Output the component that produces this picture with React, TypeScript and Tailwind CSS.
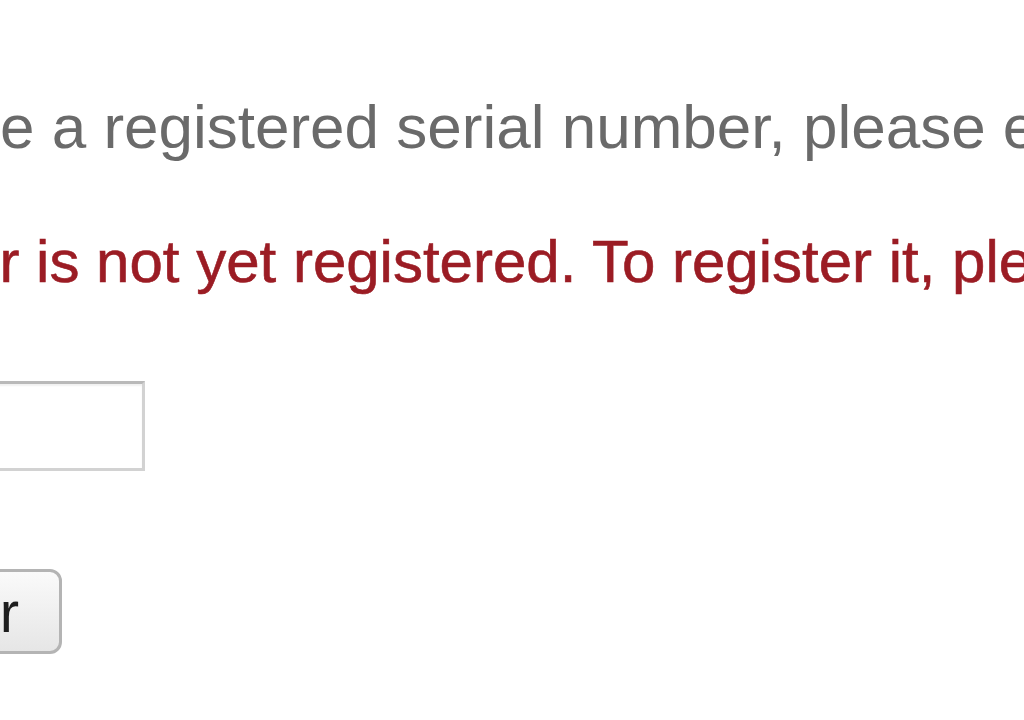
import React from "react";

export default function App() {
  return (
    <div
      className="w-[1024px] h-[720px] overflow-hidden bg-white"
      style={{ fontFamily: '"Liberation Sans", Arial, Helvetica, sans-serif' }}
    >
      <div className="flex flex-col items-start pt-[92px]">
        <p className="ml-[-100px] whitespace-nowrap text-[62px] leading-[70px] text-[#6a6a6a]">
          have a registered serial number, please enter it below.
        </p>
        <p className="ml-[-184px] mt-[65px] whitespace-nowrap text-[60px] leading-[70px] text-[#9b1c24] [-webkit-text-stroke:0.6px_#9b1c24]">
          number is not yet registered. To register it, please click here.
        </p>
        <div className="ml-[-300px] mt-[84px] h-[90px] w-[445px] border-[3px] border-[#d2d2d2] border-t-[#b9b9b9] bg-white shadow-[inset_0_2px_2px_rgba(0,0,0,0.06)]" />
        <button className="ml-[-200px] mt-[98px] flex h-[85px] w-[262px] items-center justify-end rounded-[12px] border-[3px] border-[#b4b4b4] bg-gradient-to-b from-[#fafafa] to-[#e6e6e6] pr-[40px] text-[58px] leading-none text-[#1e1e1e]">
          Register
        </button>
      </div>
    </div>
  );
}
